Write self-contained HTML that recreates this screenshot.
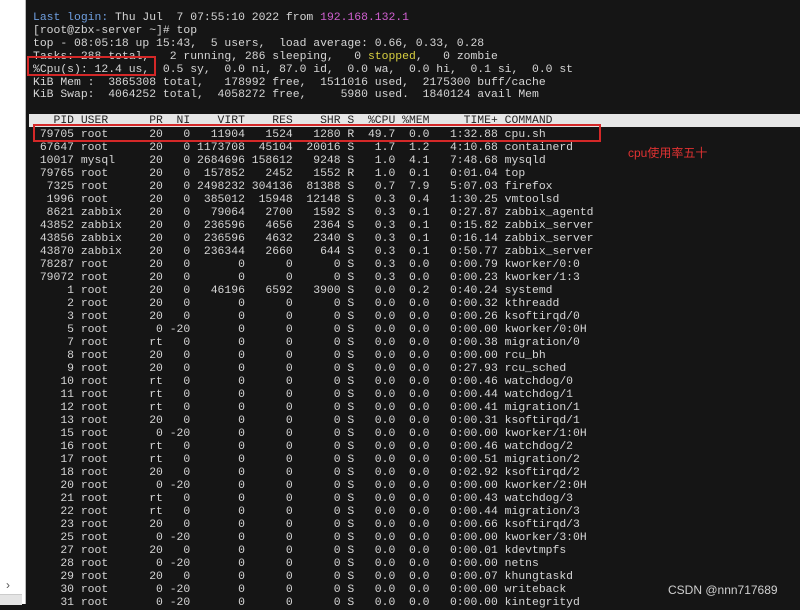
<!DOCTYPE html>
<html><head><meta charset="utf-8"><style>
body{margin:0;width:800px;height:604px;overflow:hidden;background:#151515;position:relative;font-family:"Liberation Mono",monospace}
#left{position:absolute;left:0;top:0;width:25px;height:604px;background:#fff;border-right:1px solid #bbb}
pre{position:absolute;left:33px;margin:0;font-family:"Liberation Mono","DejaVu Sans Mono",monospace;font-size:11.4px;color:#d6d6d6;white-space:pre}
.b{color:#6f9fe0}.m{color:#d060d0}.y{color:#d8d040}
#hdr{position:absolute;left:29px;top:114px;width:771px;height:13px;background:#e6e6e6}
.box{position:absolute;border:2px solid #d42828;box-sizing:border-box}
</style></head><body>
<div id="left"></div>
<div style="position:absolute;left:6px;top:578px;font:12px 'Liberation Sans',sans-serif;color:#555">›</div>
<div style="position:absolute;left:0;top:594px;width:22px;height:10px;background:#e4e4e4;border-top:1px solid #ccc"></div>
<div id="hdr"></div>
<pre style="top:12px;line-height:12.9px"><span class="b">Last login:</span> Thu Jul  7 07:55:10 2022 from <span class="m">192.168.132.1</span>
[root@zbx-server ~]# top
top - 08:05:18 up 15:43,  5 users,  load average: 0.66, 0.33, 0.28
Tasks: 288 total,   2 running, 286 sleeping,   0 <span class="y">stopped</span>,   0 zombie
%Cpu(s): 12.4 us,  0.5 sy,  0.0 ni, 87.0 id,  0.0 wa,  0.0 hi,  0.1 si,  0.0 st
KiB Mem :  3865308 total,   178992 free,  1511016 used,  2175300 buff/cache
KiB Swap:  4064252 total,  4058272 free,     5980 used.  1840124 avail Mem

<span style="color:#222">   PID USER      PR  NI    VIRT    RES    SHR S  %CPU %MEM     TIME+ COMMAND</span></pre>
<pre style="top:129px;line-height:13px"> 79705 root      20   0   11904   1524   1280 R  49.7  0.0   1:32.88 cpu.sh
 67647 root      20   0 1173708  45104  20016 S   1.7  1.2   4:10.68 containerd
 10017 mysql     20   0 2684696 158612   9248 S   1.0  4.1   7:48.68 mysqld
 79765 root      20   0  157852   2452   1552 R   1.0  0.1   0:01.04 top
  7325 root      20   0 2498232 304136  81388 S   0.7  7.9   5:07.03 firefox
  1996 root      20   0  385012  15948  12148 S   0.3  0.4   1:30.25 vmtoolsd
  8621 zabbix    20   0   79064   2700   1592 S   0.3  0.1   0:27.87 zabbix_agentd
 43852 zabbix    20   0  236596   4656   2364 S   0.3  0.1   0:15.82 zabbix_server
 43856 zabbix    20   0  236596   4632   2340 S   0.3  0.1   0:16.14 zabbix_server
 43870 zabbix    20   0  236344   2660    644 S   0.3  0.1   0:50.77 zabbix_server
 78287 root      20   0       0      0      0 S   0.3  0.0   0:00.79 kworker/0:0
 79072 root      20   0       0      0      0 S   0.3  0.0   0:00.23 kworker/1:3
     1 root      20   0   46196   6592   3900 S   0.0  0.2   0:40.24 systemd
     2 root      20   0       0      0      0 S   0.0  0.0   0:00.32 kthreadd
     3 root      20   0       0      0      0 S   0.0  0.0   0:00.26 ksoftirqd/0
     5 root       0 -20       0      0      0 S   0.0  0.0   0:00.00 kworker/0:0H
     7 root      rt   0       0      0      0 S   0.0  0.0   0:00.38 migration/0
     8 root      20   0       0      0      0 S   0.0  0.0   0:00.00 rcu_bh
     9 root      20   0       0      0      0 S   0.0  0.0   0:27.93 rcu_sched
    10 root      rt   0       0      0      0 S   0.0  0.0   0:00.46 watchdog/0
    11 root      rt   0       0      0      0 S   0.0  0.0   0:00.44 watchdog/1
    12 root      rt   0       0      0      0 S   0.0  0.0   0:00.41 migration/1
    13 root      20   0       0      0      0 S   0.0  0.0   0:00.31 ksoftirqd/1
    15 root       0 -20       0      0      0 S   0.0  0.0   0:00.00 kworker/1:0H
    16 root      rt   0       0      0      0 S   0.0  0.0   0:00.46 watchdog/2
    17 root      rt   0       0      0      0 S   0.0  0.0   0:00.51 migration/2
    18 root      20   0       0      0      0 S   0.0  0.0   0:02.92 ksoftirqd/2
    20 root       0 -20       0      0      0 S   0.0  0.0   0:00.00 kworker/2:0H
    21 root      rt   0       0      0      0 S   0.0  0.0   0:00.43 watchdog/3
    22 root      rt   0       0      0      0 S   0.0  0.0   0:00.44 migration/3
    23 root      20   0       0      0      0 S   0.0  0.0   0:00.66 ksoftirqd/3
    25 root       0 -20       0      0      0 S   0.0  0.0   0:00.00 kworker/3:0H
    27 root      20   0       0      0      0 S   0.0  0.0   0:00.01 kdevtmpfs
    28 root       0 -20       0      0      0 S   0.0  0.0   0:00.00 netns
    29 root      20   0       0      0      0 S   0.0  0.0   0:00.07 khungtaskd
    30 root       0 -20       0      0      0 S   0.0  0.0   0:00.00 writeback
    31 root       0 -20       0      0      0 S   0.0  0.0   0:00.00 kintegrityd</pre>
<div class="box" style="left:27px;top:56px;width:129px;height:20px"></div>
<div class="box" style="left:33px;top:124px;width:568px;height:18px"></div>
<div style="position:absolute;left:628px;top:144px;font:12px 'Liberation Sans','Noto Sans CJK SC',sans-serif;color:#e03232">cpu使用率五十</div>
<div style="position:absolute;left:668px;top:583px;font:12px 'Liberation Sans',sans-serif;color:#cfcfcf">CSDN @nnn717689</div>
</body></html>
